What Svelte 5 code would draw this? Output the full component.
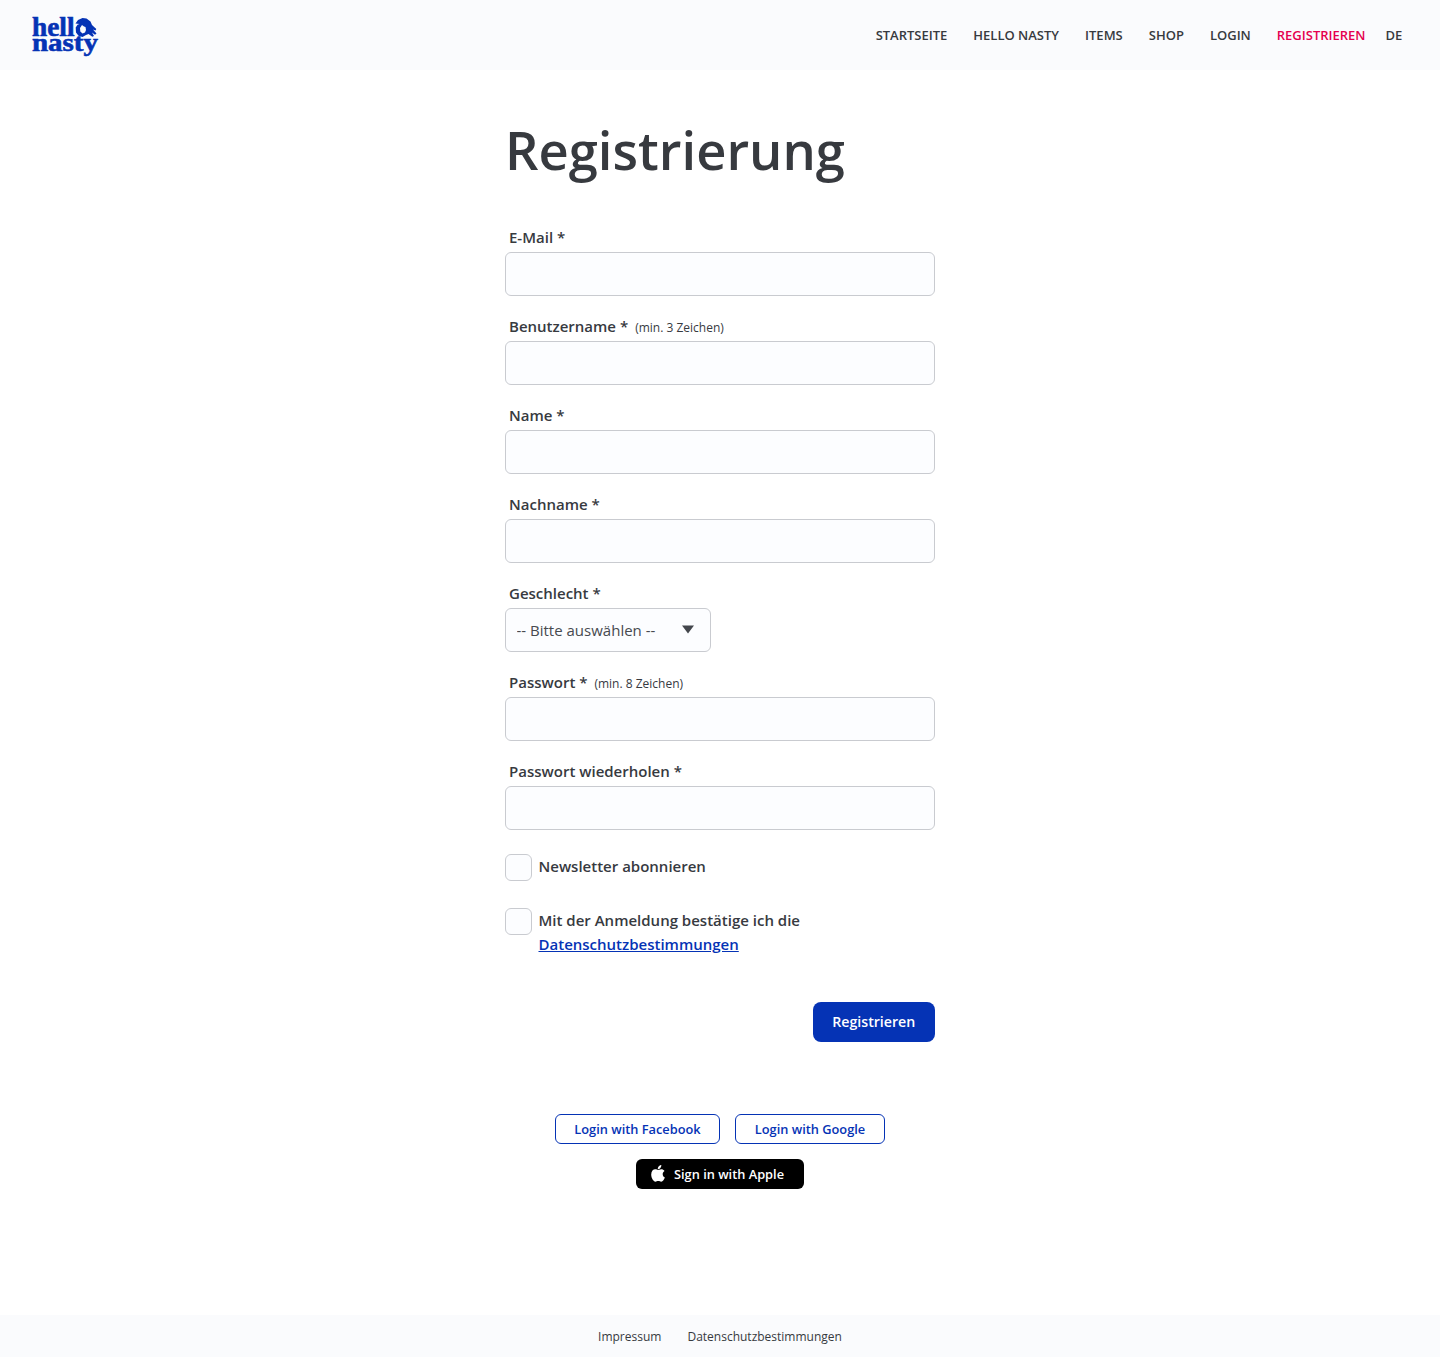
<script>
  const nav = ['Startseite', 'Hello Nasty', 'Items', 'Shop', 'Login', 'Registrieren'];
  const fields = [
    { id: 'email', label: 'E-Mail *', type: 'email' },
    { id: 'username', label: 'Benutzername *', hint: '(min. 3 Zeichen)', type: 'text' },
    { id: 'name', label: 'Name *', type: 'text' },
    { id: 'surname', label: 'Nachname *', type: 'text' },
    { id: 'gender', label: 'Geschlecht *', type: 'select' },
    { id: 'password', label: 'Passwort *', hint: '(min. 8 Zeichen)', type: 'password' },
    { id: 'repeat', label: 'Passwort wiederholen *', type: 'password' }
  ];
</script>

<div class="page">
  <header>
    <a class="logo" href="#home" aria-label="hello nasty">
      <svg width="70" height="44" viewBox="0 0 70 44">
        <text x="2" y="21.700" textLength="42.500" lengthAdjust="spacingAndGlyphs">hell</text>
        <text class="lower" x="2" y="37" textLength="66" lengthAdjust="spacingAndGlyphs">nasty</text>
        <path fill-rule="evenodd" d="M45.500 9.500 L48 6 L52.500 4 L56.500 4.500 L60.500 7.500 L62 11 L66.300 15 L65.500 16.500 L63 15.500 L66.500 19.500 L65 20.800 L62 18.500 L64 22 L62.300 22.800 L58.500 20 L56 21 L52.500 23 L48.500 21.800 L46 18.500 L45.700 13.500 L47.500 10.800 L49.500 10 Z M52 11 L50 14 L50.300 17.500 L52.500 19.500 L55 18.500 L56 16 L55.500 13 L54 12.500 Z"/>
      </svg>
    </a>
    <nav>
      {#each nav as item, i}
        <a href="#top" class:active={i === nav.length - 1}>{item}</a>
      {/each}
      <a href="#top" class="lang">DE</a>
    </nav>
  </header>

  <main>
    <h1>Registrierung</h1>
    <form>
      {#each fields as f}
        <div class="field">
          <label for={f.id}>{f.label}{#if f.hint}<small>{f.hint}</small>{/if}</label>
          {#if f.type === 'select'}
            <div class="select">
              <select id={f.id}><option>-- Bitte auswählen --</option></select>
              <svg width="12" height="9" viewBox="0 0 12 9"><path d="M0 0.500H12L6 8.500Z" /></svg>
            </div>
          {:else}
            <input id={f.id} type={f.type} />
          {/if}
        </div>
      {/each}
      <label class="check first"><input type="checkbox" /><span>Newsletter abonnieren</span></label>
      <label class="check second"><input type="checkbox" /><span>Mit der Anmeldung bestätige ich die<br /><a href="#privacy">Datenschutzbestimmungen</a></span></label>
      <button class="submit" type="button">Registrieren</button>
    </form>
    <div class="social">
      <div class="row">
        <button type="button" class="facebook">Login with Facebook</button>
        <button type="button" class="google">Login with Google</button>
      </div>
      <button type="button" class="apple">
        <svg width="14" height="17" viewBox="0 0 14 17"><path d="M10.300 0C10.400 1.400 9.900 2.500 9.200 3.200 8.500 4 7.600 4.300 6.800 4.200 6.700 3 7.200 1.900 7.900 1.200 8.600 .5 9.500 .1 10.300 0ZM7 5C7.700 5 8.700 4.200 10.200 4.200 11.500 4.200 12.900 4.900 13.500 5.900 12.200 6.800 11.700 7.900 11.700 9.200 11.700 10.800 12.500 12 13.900 12.500 13.300 14 11.800 16.700 10.200 16.700 9.100 16.700 8.600 16 7.300 16 6 16 5.500 16.700 4.400 16.700 2.600 16.700 .2 13.200 .2 9.600 .2 6.100 2.200 4.300 4.200 4.300 5.500 4.300 6.300 5 7 5Z" /></svg>
        Sign in with Apple
      </button>
    </div>
  </main>

  <footer><a href="#imprint">Impressum</a><a href="#privacy">Datenschutzbestimmungen</a></footer>
</div>

<style>
  :global(body) { margin: 0; background: #fff; }
  .page {
    min-height: 1357px;
    display: flex;
    flex-direction: column;
    font-family: 'Open Sans', sans-serif;
    font-weight: 600;
    color: #373a3f;
  }
  .page * { box-sizing: border-box; }
  a { color: inherit; text-decoration: none; }
  header {
    height: 70px;
    background: #fafbfd;
    display: flex;
    justify-content: space-between;
    padding: 14px 37.7px 0 30px;
  }
  .logo svg { display: block; overflow: visible; fill: #0533b5; }
  .logo text {
    font: bold 27px 'Liberation Serif', serif;
    stroke: #0533b5;
    stroke-width: 0.6px;
  }
  .logo .lower { font-size: 26px; }
  nav {
    display: flex;
    gap: 26px;
    font-size: 13px;
    line-height: 20px;
    text-transform: uppercase;
    padding-top: 11px;
  }
  .active { color: #e5004f; }
  .lang { margin-left: -6px; }
  main { width: 430px; margin: 0 auto; flex: 1; }
  h1 {
    margin: 40px 0 36px;
    font-size: 52.5px;
    line-height: 80px;
    font-weight: 600;
  }
  form { display: flex; flex-direction: column; }
  .field { height: 89px; }
  .field label {
    display: block;
    height: 26px;
    font-size: 15px;
    line-height: 22px;
    padding-left: 4px;
  }
  small { font-size: 12px; font-weight: 400; margin-left: 7px; }
  input, select {
    appearance: none;
    display: block;
    margin: 0;
    width: 100%;
    height: 44px;
    border: 1px solid #c9cbd0;
    border-radius: 6px;
    background: #fcfdff;
    outline: none;
  }
  .select { position: relative; width: 206px; }
  select { font: 400 15px 'Open Sans', sans-serif; color: #474a4f; padding: 0 10.5px; }
  .select svg { position: absolute; right: 17px; top: 17px; fill: #43464c; pointer-events: none; }
  .check { display: flex; gap: 7px; font-size: 15px; line-height: 24px; }
  .check input { width: 26.5px; height: 26.5px; flex: none; }
  .first { height: 27px; margin-top: 5px; }
  .second { margin-top: 27px; }
  .check a { color: #0533b5; text-decoration: underline; }
  button { font: 600 12.8px 'Open Sans', sans-serif; cursor: pointer; padding: 0; }
  .submit {
    align-self: flex-end;
    width: 122.5px;
    height: 40px;
    margin-top: 46px;
    padding-bottom: 2px;
    border: 0;
    border-radius: 8px;
    background: #0533b5;
    color: #fff;
    font-size: 14.2px;
  }
  .social { display: flex; flex-direction: column; align-items: center; gap: 15px; margin-top: 72px; }
  .row { display: flex; gap: 15px; }
  .row button { height: 30px; border: 1px solid #0533b5; border-radius: 6px; color: #0533b5; background: #fff; }
  .facebook { width: 165px; }
  .google { width: 150px; }
  .apple {
    width: 168px;
    height: 30px;
    border: 0;
    border-radius: 6px;
    background: #000;
    color: #fff;
    display: flex;
    align-items: center;
    padding-left: 15px;
    gap: 9px;
  }
  .apple svg { fill: #fff; margin-bottom: 2px; }
  footer {
    height: 42px;
    background: #fafbfd;
    display: flex;
    justify-content: center;
    gap: 26px;
    font-size: 12px;
    font-weight: 400;
    line-height: 44px;
  }
</style>
